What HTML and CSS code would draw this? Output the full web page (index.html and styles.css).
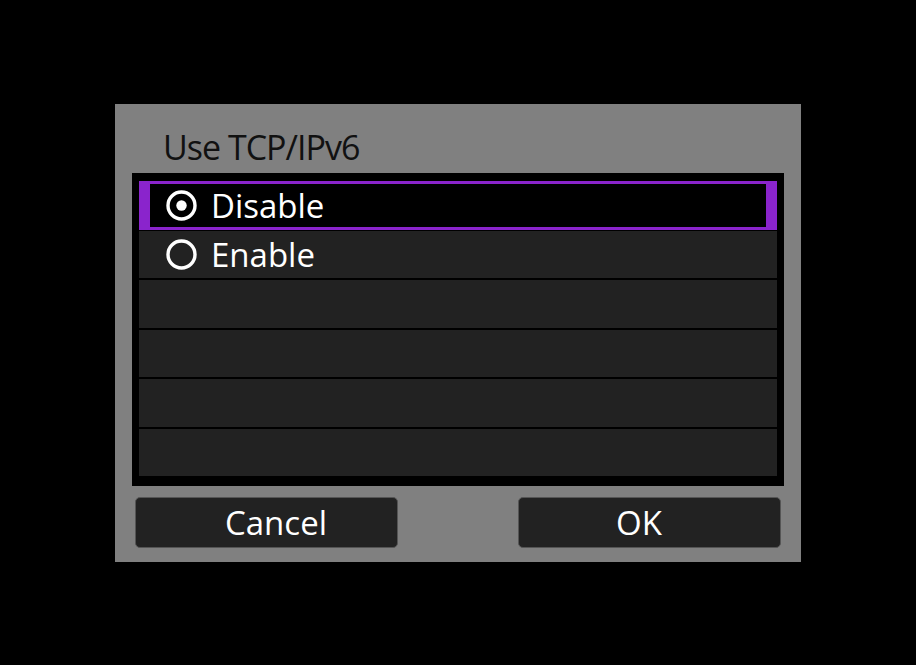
FILE: index.html
```html
<!DOCTYPE html>
<html lang="en">
<head>
    <meta charset="UTF-8">
    <meta name="viewport" content="width=device-width, initial-scale=1.0">
    <title>Use TCP/IPv6</title>
    <link rel="stylesheet" href="styles.css">
</head>
<body>
    <div class="dialog">
        <h1 class="title">Use TCP/IPv6</h1>
        <div class="list">
            <div class="row selected">
                <svg class="radio" width="31" height="31" viewBox="0 0 31 31">
                    <circle cx="15.5" cy="15.5" r="13.5" fill="none" stroke="#fff" stroke-width="3.4"/>
                    <circle cx="15.5" cy="15.5" r="5.2" fill="#fff"/>
                </svg>
                <span>Disable</span>
            </div>
            <div class="row">
                <svg class="radio" width="31" height="31" viewBox="0 0 31 31">
                    <circle cx="15.5" cy="15.5" r="13.5" fill="none" stroke="#fff" stroke-width="3.4"/>
                </svg>
                <span>Enable</span>
            </div>
            <div class="row"></div>
            <div class="row"></div>
            <div class="row"></div>
            <div class="row"></div>
        </div>
        <div class="buttons">
            <button class="cancel">Cancel</button>
            <button class="ok">OK</button>
        </div>
    </div>
</body>
</html>
```

FILE: styles.css
```css
html, body {
    height: 100%;
}
body {
    margin: 0;
    background-color: #000;
    font-family: "Open Sans", "Noto Sans", sans-serif;
    color: #fff;
    display: flex;
    align-items: center;
    justify-content: center;
}
.dialog {
    width: 686px;
    height: 458px;
    box-sizing: border-box;
    background-color: #808080;
    padding: 0 17px;
}
.title {
    margin: 0;
    height: 69px;
    box-sizing: border-box;
    padding: 26px 0 0 31px;
    font-size: 34px;
    line-height: 34px;
    letter-spacing: -1px;
    font-weight: normal;
    color: #111;
}
.list {
    height: 313px;
    box-sizing: border-box;
    background-color: #000;
    padding: 8px 7px 0;
    display: flex;
    flex-direction: column;
    gap: 2px;
}
.row {
    height: 47.6px;
    box-sizing: border-box;
    background-color: #222;
    display: flex;
    align-items: center;
    padding-left: 27px;
    font-size: 33px;
}
.row.selected {
    background-color: #000;
    border: solid #8a24cc;
    border-width: 3px 11px 3px 11px;
    padding-left: 16px;
    height: 49px;
    margin-bottom: -1px;
}
.radio {
    flex: none;
    margin-right: 14px;
}
.buttons {
    display: flex;
    justify-content: space-between;
    margin: 11px 3px 0;
}
button {
    width: 263px;
    height: 51px;
    background-color: #222;
    border: 1px solid #555;
    border-radius: 5px;
    color: #fff;
    font-family: inherit;
    font-size: 33px;
    line-height: 1;
    padding: 0;
}
.cancel {
    padding-left: 19px;
}
.ok {
    padding-right: 21px;
}
```
